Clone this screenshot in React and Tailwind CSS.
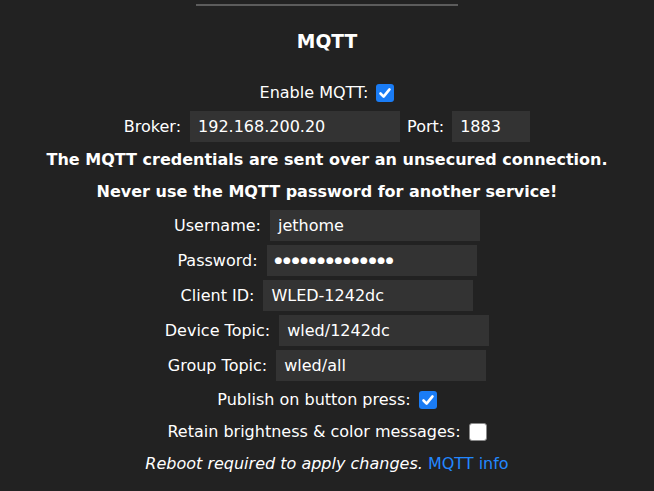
import React from 'react'

const font = { fontFamily: '"DejaVu Sans", Verdana, sans-serif' }

function Check({ on }) {
    if (!on) {
        return (
            <span className="inline-block w-[18px] h-[18px] rounded-[3px] bg-white border border-[#8a8a8a] ml-[8px]" />
        )
    }
    return (
        <span className="inline-flex items-center justify-center w-[18px] h-[18px] rounded-[3px] bg-[#1a7cf5] ml-[8px]">
            <svg width="14" height="14" viewBox="0 0 14 14">
                <path d="M2.5 7.5 L5.6 10.6 L11.5 3.4" fill="none" stroke="#fff" strokeWidth="2.6" strokeLinecap="round" strokeLinejoin="round" />
            </svg>
        </span>
    )
}

function Field({ label, value, w = 'w-[210px]', gap = 'ml-[9px]' }) {
    return (
        <div className="h-[35px] flex items-center justify-center">
            <span>{label}</span>
            <span className={`${gap} ${w} h-[31px] bg-[#333] text-left pl-[8px] flex items-center leading-none`}>{value}</span>
        </div>
    )
}

export default function App() {
    return (
        <div style={font} className="w-[654px] h-[491px] overflow-hidden bg-[#222] text-white text-center text-[16px]">
            {/* divider */}
            <div className="mx-auto mt-[4px] w-[262px] h-[2px] bg-[#5c5c5c]" />

            <h3 className="mt-[17px] h-[37px] leading-[37px] text-[18.7px] font-bold">MQTT</h3>

            <div className="mt-[17px] h-[32px] flex items-center justify-center">
                <span>Enable MQTT:</span>
                <Check on />
            </div>

            <div className="h-[35px] flex items-center justify-center">
                <span>Broker:</span>
                <span className="ml-[9px] w-[210px] h-[31px] bg-[#333] text-left pl-[8px] flex items-center">192.168.200.20</span>
                <span className="ml-[7px]">Port:</span>
                <span className="ml-[8px] w-[78px] h-[31px] bg-[#333] text-left pl-[8px] flex items-center">1883</span>
            </div>

            <div className="h-[32px] leading-[32px] font-bold">The MQTT credentials are sent over an unsecured connection.</div>
            <div className="h-[32px] leading-[32px] font-bold">Never use the MQTT password for another service!</div>

            <Field label="Username:" value="jethome" />
            <Field label="Password:" value={<span className="tracking-[0.7px] text-[9px]">{'●●●●●●●●●●●●●●'}</span>} />
            <Field label="Client ID:" value="WLED-1242dc" />
            <Field label="Device Topic:" value="wled/1242dc" />
            <Field label="Group Topic:" value="wled/all" />

            <div className="mt-[1px] h-[32px] flex items-center justify-center">
                <span>Publish on button press:</span>
                <Check on />
            </div>
            <div className="h-[32px] flex items-center justify-center">
                <span>Retain brightness &amp; color messages:</span>
                <Check on={false} />
            </div>

            <div className="h-[32px] leading-[32px]">
                <i>Reboot required to apply changes.</i>{' '}
                <a href="#" className="text-[#2288ff]">MQTT info</a>
            </div>
        </div>
    )
}
